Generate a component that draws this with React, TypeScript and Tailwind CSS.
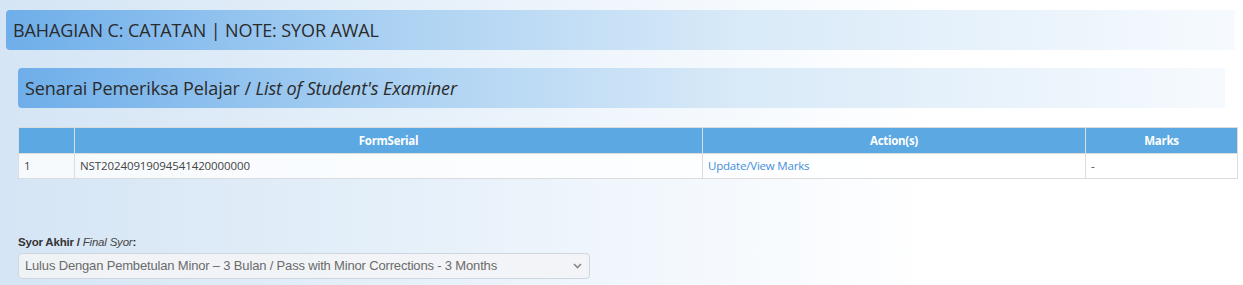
import React from "react";

const rows = [
  { no: 1, serial: "NST20240919094541420000000", marks: "-" },
];

export default function App() {
  return (
    <div className="relative h-[285px] w-[1243px] overflow-hidden bg-[linear-gradient(90deg,#d5e5f5_0%,#e4eff9_30%,#f3f8fd_55%,#ffffff_75%)] font-['Open_Sans',sans-serif] text-[#333]">
      {/* Section header */}
      <div className="ml-[6px] mt-[10px] flex h-[40px] w-[1229px] items-center rounded-l-[4px] bg-[linear-gradient(90deg,#6eaeea_0%,#a9d0f2_30%,#d9eaf8_60%,rgba(240,247,253,0.6)_100%)] pl-[7px]">
        <h2 className="text-[18px] leading-none tracking-[-0.1px] text-[#2b2b2b]">
          BAHAGIAN C: CATATAN | NOTE: SYOR AWAL
        </h2>
      </div>

      <div className="ml-[18px] mt-[18px] w-[1219px]">
        {/* Sub header */}
        <div className="flex h-[40px] w-[1207px] items-center rounded-l-[4px] bg-[linear-gradient(90deg,#6eaeea_0%,#a9d0f2_30%,#d9eaf8_60%,rgba(240,247,253,0.6)_100%)] pl-[7px]">
          <h3 className="text-[18px] leading-none tracking-[-0.1px] text-[#2b2b2b]">
            Senarai Pemeriksa Pelajar / <i>List of Student's Examiner</i>
          </h3>
        </div>

        {/* Examiner table */}
        <table className="mt-[19px] w-[1219px] table-fixed border-collapse text-[11.5px]">
          <colgroup>
            <col className="w-[56px]" />
            <col className="w-[628px]" />
            <col className="w-[383px]" />
            <col className="w-[152px]" />
          </colgroup>
          <thead>
            <tr className="h-[26px] bg-[#5ca8e2] text-white">
              <th className="border border-[#dcdcdc] font-bold"></th>
              <th className="border border-[#dcdcdc] font-bold tracking-[-0.3px]">FormSerial</th>
              <th className="border border-[#dcdcdc] font-bold tracking-[-0.3px]">Action(s)</th>
              <th className="border border-[#dcdcdc] font-bold tracking-[-0.3px]">Marks</th>
            </tr>
          </thead>
          <tbody>
            {rows.map((r) => (
              <tr key={r.no} className="h-[25px] bg-[rgba(255,255,255,0.8)]">
                <td className="border border-[#dcdcdc] px-[5px] text-[#444]">{r.no}</td>
                <td className="border border-[#dcdcdc] px-[5px] tracking-[-0.1px] text-[#444]">{r.serial}</td>
                <td className="border border-[#dcdcdc] px-[5px]">
                  <a href="#" className="tracking-[-0.2px] text-[#3f8fdc]">Update/View Marks</a>
                </td>
                <td className="border border-[#dcdcdc] px-[5px] text-[#444]">{r.marks}</td>
              </tr>
            ))}
          </tbody>
        </table>

        {/* Final recommendation */}
        <div className="mt-[56px] font-['Liberation_Sans',sans-serif]">
          <label className="block text-[11.5px] font-bold leading-[15px] tracking-[-0.2px] text-[#333]">
            Syor Akhir / <i className="font-normal text-[#444]">Final Syor</i>:
          </label>
          <div className="relative mt-[3px] h-[26px] w-[572px]">
            <select
              disabled
              className="h-full w-full appearance-none rounded-[4px] border border-[#cfd6dd] bg-[rgba(243,244,246,0.9)] pl-[6px] text-[13px] tracking-[-0.17px] text-[#6b6b6b]"
              defaultValue="minor3"
            >
              <option value="minor3">
                Lulus Dengan Pembetulan Minor – 3 Bulan / Pass with Minor Corrections - 3 Months
              </option>
            </select>
            <svg
              className="pointer-events-none absolute right-[8px] top-[10px]"
              width="9"
              height="6"
              viewBox="0 0 9 6"
            >
              <path d="M1 1l3.5 3.5L8 1" fill="none" stroke="#888" strokeWidth="1.6" />
            </svg>
          </div>
        </div>
      </div>
    </div>
  );
}
